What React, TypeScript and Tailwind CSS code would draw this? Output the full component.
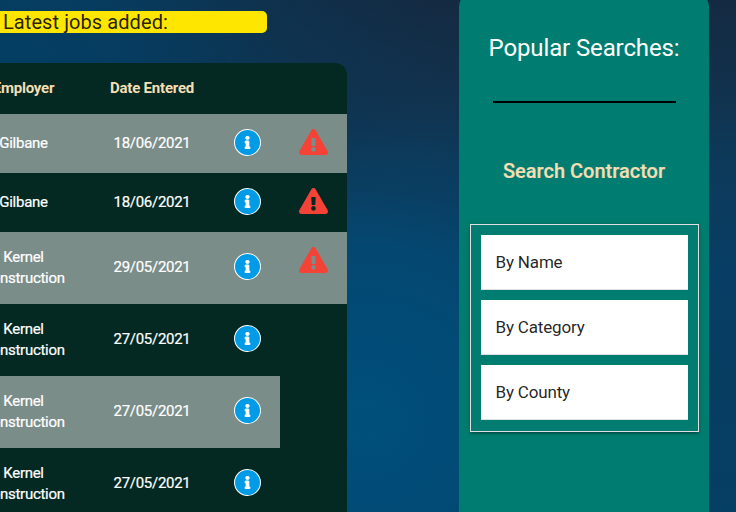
import React from "react";
import { FaInfo, FaExclamationTriangle } from "react-icons/fa";

type Job = { employer: string[]; date: string; alert: boolean };

const kernel = ["Kernel", "Construction"];
const jobs: Job[] = [
  { employer: ["Gilbane"], date: "18/06/2021", alert: true },
  { employer: ["Gilbane"], date: "18/06/2021", alert: true },
  { employer: kernel, date: "29/05/2021", alert: true },
  { employer: kernel, date: "27/05/2021", alert: false },
  { employer: kernel, date: "27/05/2021", alert: false },
  { employer: kernel, date: "27/05/2021", alert: false },
];

function JobRow({ job, index }: { job: Job; index: number }) {
  const striped = index % 2 === 0;
  const tall = job.employer.length > 1;
  return (
    <div
      className={`flex shrink-0 ${tall ? "h-[72px]" : "h-[59px]"} ${
        job.alert ? "w-[388px]" : "w-[321px]"
      } ${striped ? "bg-[#7b8d89]" : ""}`}
    >
      <div className="flex w-[129px] flex-col items-center justify-center leading-[21px]">
        {job.employer.map((line) => (
          <span key={line}>{line}</span>
        ))}
      </div>
      <div className={`flex w-[127px] items-center justify-center pl-[1px] ${tall ? "pb-[2px]" : ""}`}>{job.date}</div>
      <div className={`flex w-[65px] items-center justify-center ${tall ? "pb-[3px]" : "pb-[2px]"}`}>
        <span className="flex size-[27px] items-center justify-center rounded-full bg-white">
          <span className="flex size-[25px] items-center justify-center rounded-full bg-[#039be5]">
            <FaInfo size={13} color="#fff" stroke="#fff" strokeWidth={30} />
          </span>
        </span>
      </div>
      {job.alert && (
        <div className="flex w-[67px] justify-center pt-[15px]">
          <FaExclamationTriangle className="h-[26px] w-[29px]" color="#f44336" />
        </div>
      )}
    </div>
  );
}

export default function App() {
  return (
    <div className="flex h-[512px] w-[736px] overflow-hidden bg-[radial-gradient(ellipse_300px_290px_at_365px_420px,#004f7b_0%,#014b76_35%,#034a74cc_60%,#07446a66_80%,#0a3c6000_100%),radial-gradient(ellipse_440px_260px_at_0px_60px,#033e63_0%,#063c60_30%,#0b365499_65%,#132b4300_100%),linear-gradient(180deg,#142a42_0%,#12304b_15%,#0d3959_30%,#083e65_53%,#083d62_75%,#063f64_100%)] font-[Roboto,sans-serif]">
      <main className="-ml-[41px] flex w-[388px] shrink-0 flex-col pt-[11px]">
        <h2 className="h-[22px] w-[308px] rounded-[5px] bg-[#ffe600] pl-[44px] text-[20px] leading-[22px] tracking-[0.08px] text-black/87">
          Latest jobs added:
        </h2>
        <section className="mt-[30px] flex h-[480px] shrink-0 flex-col overflow-hidden rounded-t-[12px] bg-[#042923] text-[15px] tracking-[-0.28px] text-white [-webkit-text-stroke:0.2px_white]">
          <div className="flex h-[51px] shrink-0 items-center text-center font-bold tracking-[-0.2px] text-[#f5deb3] [-webkit-text-stroke:0px]">
            <span className="w-[129px]">Employer</span>
            <span className="w-[127px] pl-[1px]">Date Entered</span>
          </div>
          {jobs.map((job, i) => (
            <JobRow key={i} job={job} index={i} />
          ))}
        </section>
      </main>
      <aside className="-mt-[8px] ml-[112px] h-[540px] w-[250px] shrink-0 rounded-[15px] bg-[#007d70] px-[11px] pt-[40px]">
        <h2 className="text-center text-[24px] leading-[32px] tracking-[-0.12px] text-white">Popular Searches:</h2>
        <hr className="mx-auto mt-[37px] h-[2px] w-[183px] border-0 bg-black" />
        <h3 className="mt-[53px] text-center text-[20px] font-medium leading-[30px] text-[#f5deb3] [-webkit-text-stroke:0.2px_#f5deb3]">
          Search Contractor
        </h3>
        <ul className="mt-[38px] flex h-[208px] w-[229px] flex-col gap-[10px] border border-[#e0e0e0] p-[10px] shadow-[0_2px_2px_0_rgba(0,0,0,0.14),0_3px_1px_-2px_rgba(0,0,0,0.12),0_1px_5px_0_rgba(0,0,0,0.2)]">
          {["By Name", "By Category", "By County"].map((label) => (
            <li
              key={label}
              className="flex h-[55px] items-center border-b border-[#e0e0e0] bg-white pl-[14.5px] pt-[1px] text-[17px] tracking-[-0.17px] text-black/87"
            >
              {label}
            </li>
          ))}
        </ul>
      </aside>
    </div>
  );
}
